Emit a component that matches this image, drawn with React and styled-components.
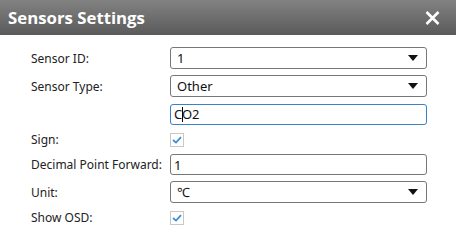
import React from "react";
import styled, { createGlobalStyle } from "styled-components";

const GlobalStyle = createGlobalStyle`
  html, body {
    margin: 0;
    padding: 0;
    background: #fff;
  }
  body {
    font-family: "Noto Sans", "Open Sans", sans-serif;
  }
`;

const fields = [
  { label: "Sensor ID:", kind: "select", value: "1", h: 22 },
  { label: "Sensor Type:", kind: "select", value: "Other", h: 22 },
  { label: "", kind: "active", value: "CO2", h: 22 },
  { label: "Sign:", kind: "check", h: 17 },
  { label: "Decimal Point Forward:", kind: "input", value: "1", h: 21 },
  { label: "Unit:", kind: "select", value: "℃", h: 22 },
  { label: "Show OSD:", kind: "check", h: 17 },
];

function Check() {
  return (
    <CheckBox>
      <svg width="10" height="8" viewBox="0 0 10 8">
        <path d="M1 4 L4 6.6 L9 1.2" fill="none" stroke="#3b8ed8" strokeWidth="1.8" />
      </svg>
    </CheckBox>
  );
}

function Arrow() {
  return (
    <svg width="10" height="6" viewBox="0 0 10 6">
      <path d="M0 0 H10 L5 6 Z" fill="#111" />
    </svg>
  );
}

function Field({ f }) {
  if (f.kind === "check") return <Check />;
  if (f.kind === "select")
    return (
      <Select>
        <span>{f.value}</span>
        <Arrow />
      </Select>
    );
  if (f.kind === "active")
    return (
      <Input $active>
        {f.value}
        <Caret />
      </Input>
    );
  return <Input>{f.value}</Input>;
}

export default function App() {
  return (
    <Dialog>
      <GlobalStyle />
      <Header>
        <Title>Sensors Settings</Title>
        <Close aria-label="close">
          <svg width="15" height="14" viewBox="0 0 15 14">
            <path d="M1.5 1 L13.5 13 M13.5 1 L1.5 13" stroke="#fff" strokeWidth="2.6" />
          </svg>
        </Close>
      </Header>
      <Form>
        {fields.map((f, i) => (
          <Row key={i} $h={f.h}>
            <Label>{f.label}</Label>
            <Field f={f} />
          </Row>
        ))}
      </Form>
    </Dialog>
  );
}

const Dialog = styled.div`
  width: 456px;
  height: 248px;
  background: #fff;
  overflow: hidden;
`;

const Header = styled.div`
  height: 35px;
  display: flex;
  align-items: center;
  justify-content: space-between;
  padding: 0 16px 0 8px;
  background: linear-gradient(#828282, #5a5a5a);
`;

const Title = styled.h1`
  margin: 0;
  color: #fff;
  font-family: "Open Sans", sans-serif;
  font-size: 16.8px;
  font-weight: 700;
`;

const Close = styled.div`
  display: flex;
  align-items: center;
`;

const Form = styled.div`
  display: flex;
  flex-direction: column;
  gap: 6px;
  padding: 12px 0 0 31px;
`;

const Row = styled.div`
  display: grid;
  grid-template-columns: 139px 257px;
  align-items: center;
  height: ${(p) => p.$h}px;
`;

const Label = styled.div`
  font-size: 12px;
  color: #222;
  white-space: nowrap;
`;

const Select = styled.div`
  height: 22px;
  box-sizing: border-box;
  border: 1px solid #777;
  border-radius: 3px;
  display: flex;
  align-items: center;
  justify-content: space-between;
  padding: 0 8px 0 6px;
  font-size: 13px;
  color: #111;
`;

const Input = styled.div`
  position: relative;
  height: 21px;
  box-sizing: border-box;
  border: 1px solid ${(p) => (p.$active ? "#3a82c4" : "#777")};
  border-radius: 3px;
  display: flex;
  align-items: center;
  padding: 0 3px;
  font-size: 13px;
  color: #111;
`;

const Caret = styled.span`
  position: absolute;
  left: 10.5px;
  top: 2px;
  width: 1px;
  height: 15px;
  background: #000;
`;

const CheckBox = styled.div`
  width: 14px;
  height: 14px;
  box-sizing: border-box;
  border: 1px solid #c8c8c8;
  background: #fff;
  display: flex;
  align-items: center;
  justify-content: center;
`;
